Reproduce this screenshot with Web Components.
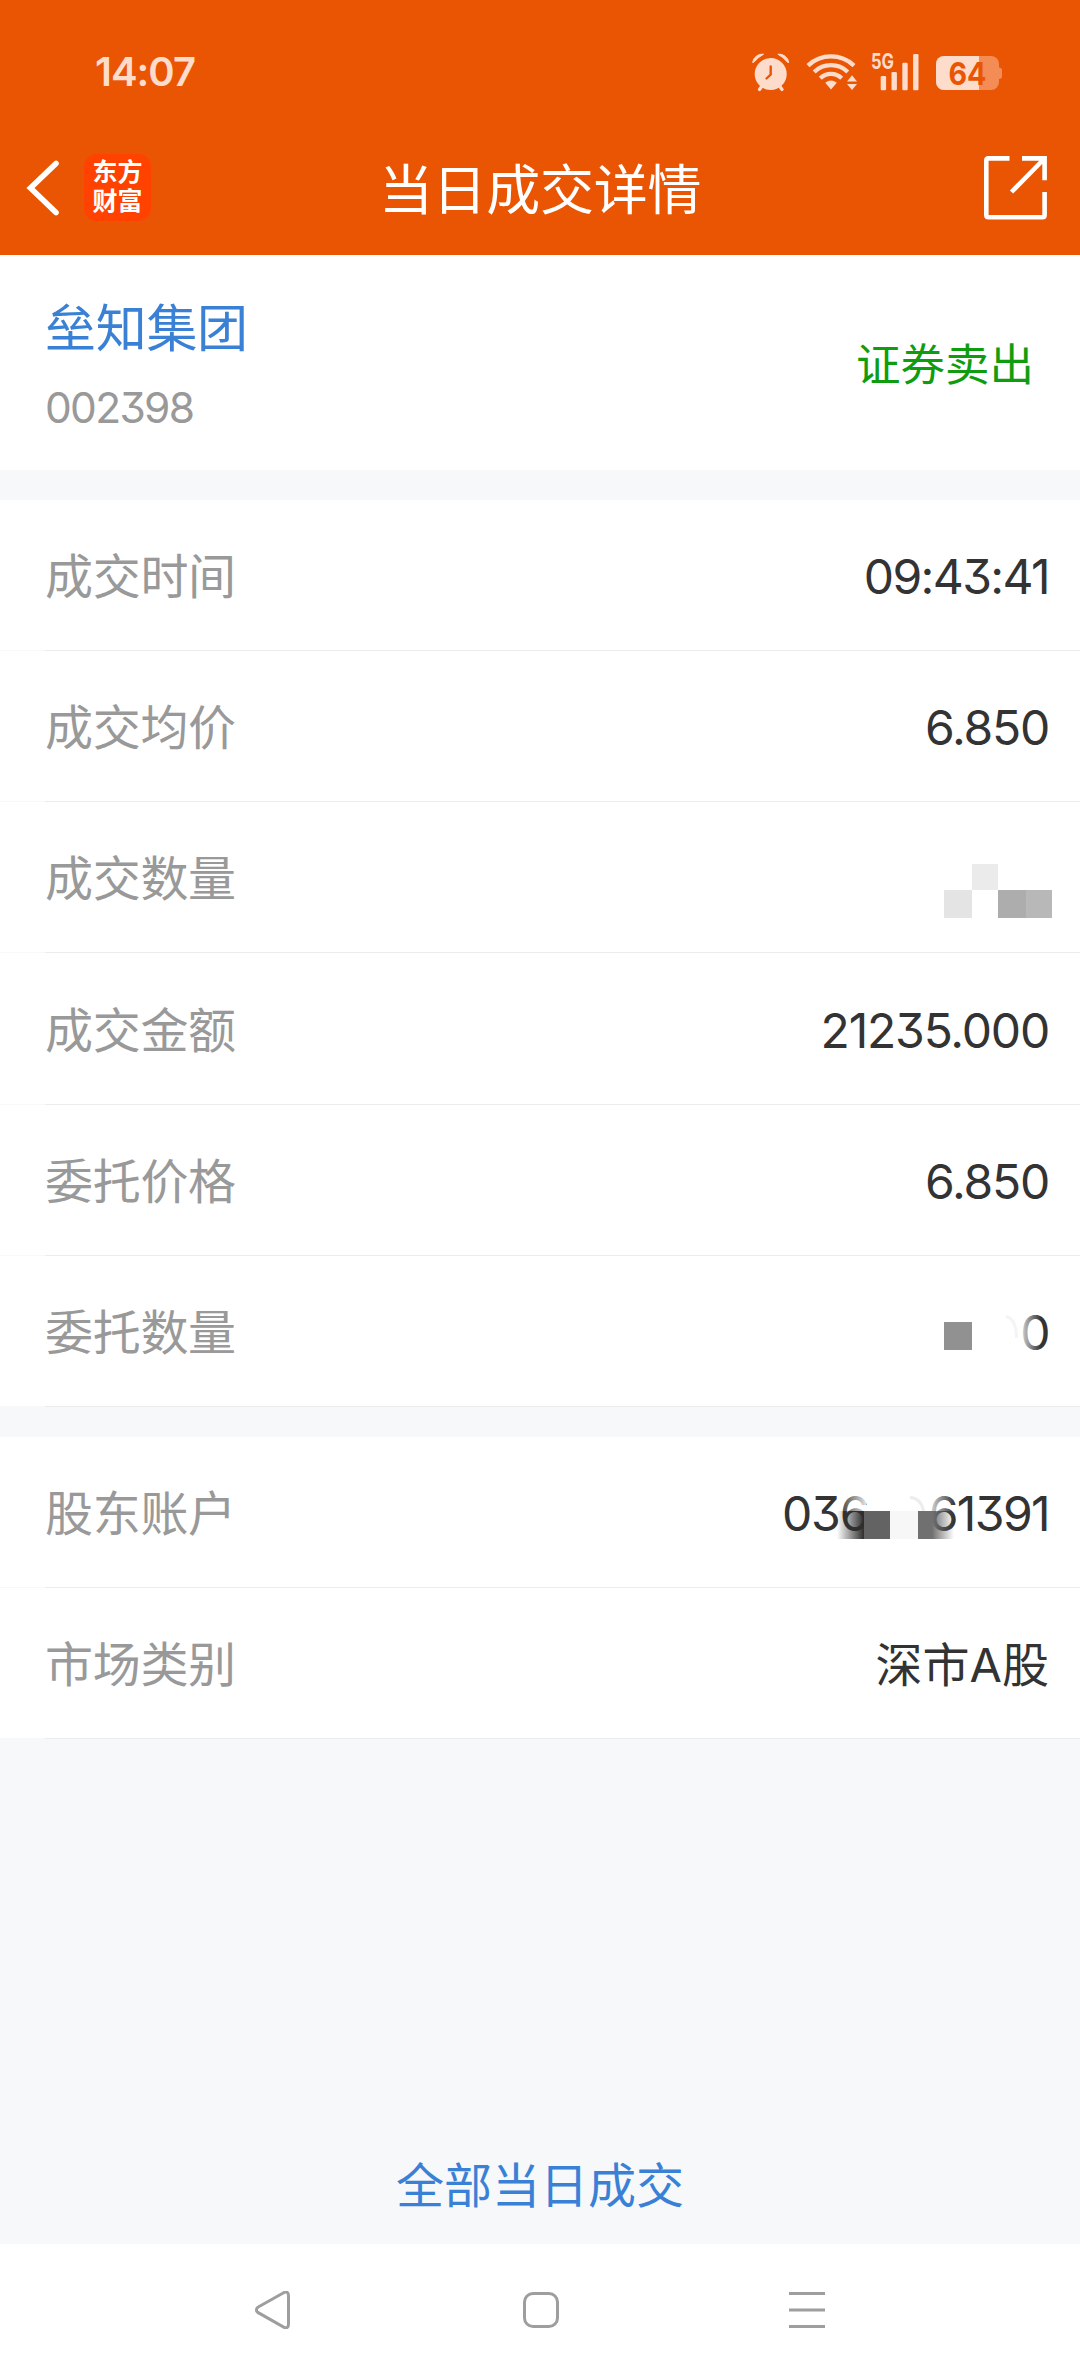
<!DOCTYPE html>
<html lang="zh-CN">
<head>
<meta charset="utf-8">
<title>当日成交详情</title>
<style>
  html, body {
    margin: 0;
    padding: 0;
  }

  body {
    --brand: #ea5504;
    --status: #fddccb;
    --link: #3a81d6;
    --sell: #0f9d0f;
    --label: #999;
    --text: #333;
    --page: #f6f8fa;
    --line: #ececec;
    width: 1080px;
    height: 2376px;
    overflow: hidden;
    background: var(--page);
    font-family: Inter, "Noto Sans CJK SC", sans-serif;
    font-feature-settings: "cv09";
  }
</style>
</head>
<body>
<trade-screen>
  <status-bar slot="header" time="14:07" battery="64"></status-bar>
  <title-bar slot="header" heading="当日成交详情"></title-bar>

  <stock-summary name="垒知集团" code="002398">证券卖出</stock-summary>

  <detail-group>
    <detail-row label="成交时间" tight>09:43:41</detail-row>
    <detail-row label="成交均价">6.850</detail-row>
    <detail-row label="成交数量"><masked-value kind="volume"></masked-value></detail-row>
    <detail-row label="成交金额">21235.000</detail-row>
    <detail-row label="委托价格">6.850</detail-row>
    <detail-row label="委托数量"><masked-value kind="order">0</masked-value></detail-row>
  </detail-group>

  <detail-group>
    <detail-row label="股东账户"><masked-value kind="account"><span slot="head">036</span>61391</masked-value></detail-row>
    <detail-row label="市场类别" cjk>深市A股</detail-row>
  </detail-group>

  <a slot="footer">全部当日成交</a>
  <nav-bar slot="nav"></nav-bar>
</trade-screen>

<script>
/**
 * Base class: opens a shadow root and fills it from template()
 */
class BaseElement extends HTMLElement {
  constructor() {
    super();
    this.attachShadow({ mode: 'open' });
  }

  connectedCallback() {
    this.shadowRoot.innerHTML = this.template();
  }

  attr(name) {
    return this.getAttribute(name) || '';
  }
}

/**
 * Whole screen: header, scrolling content, footer link, system nav
 */
class TradeScreen extends BaseElement {
  template() {
    return `
      <style>
        :host {
          display: flex;
          flex-direction: column;
          height: 2376px;
        }
        header {
          height: 255px;
          background: var(--brand);
        }
        main {
          display: flex;
          flex-direction: column;
          gap: 30px;
        }
        footer {
          flex: 1;
          display: flex;
          align-items: flex-end;
          justify-content: center;
          padding-bottom: 22px;
          font-size: 48px;
          line-height: 72px;
          color: var(--link);
        }
      </style>
      <header><slot name="header"></slot></header>
      <main><slot></slot></main>
      <footer><slot name="footer"></slot></footer>
      <slot name="nav"></slot>
    `;
  }
}

/**
 * System status bar
 */
class StatusBar extends BaseElement {
  template() {
    return `
      <style>
        :host {
          display: flex;
          align-items: center;
          box-sizing: border-box;
          height: 120px;
          padding: 24px 78px 0 95px;
          color: var(--status);
        }
        .time {
          flex: 1;
          font-size: 40px;
          font-weight: 600;
          line-height: 40px;
          letter-spacing: -1px;
        }
        svg {
          display: block;
          overflow: visible;
          fill: currentColor;
        }
        .wifi { margin-left: 16px; }
        .signal { margin-left: 12px; }
        .battery { margin-left: 16px; }
        .stroke {
          fill: none;
          stroke: currentColor;
        }
      </style>
      <span class="time">${this.attr('time')}</span>
      <svg width="38" height="40" viewBox="752 52 38 40">
        <circle cx="770.7" cy="74" r="16"/>
        <path d="M752.6 62.5 A9.8 9.8 0 0 1 763.5 54.2 Q759 56.5 753.5 62.5Z M788.8 62.5 A9.8 9.8 0 0 0 777.9 54.2 Q782.4 56.5 787.9 62.5Z" stroke="currentColor" stroke-width="1"/>
        <path class="stroke" d="M762 86 L759.5 89.5 M779.5 86 L782 89.5" stroke-width="3.2" stroke-linecap="round"/>
        <path d="M770.7 66.5 V74.5 L766.5 78.5" fill="none" stroke="#ea5504" stroke-width="2.4" stroke-linecap="round"/>
      </svg>
      <svg class="wifi" width="52" height="40" viewBox="806 52 52 40">
        <g class="stroke" stroke-width="4.2">
          <path d="M808 65.6 A33.5 33.5 0 0 1 854 65.6"/>
          <path d="M814.2 72 A24 24 0 0 1 847.8 72"/>
          <path d="M820.3 78.2 A15.2 15.2 0 0 1 841.7 78.2"/>
        </g>
        <path d="M825.2 82.7 Q831 78.2 836.8 82.7 L831 89.4Z"/>
        <path d="M852 75.2 L857 81.5 H847Z M852 90 L857 84 H847Z"/>
      </svg>
      <svg class="signal" width="50" height="50" viewBox="870 47 50 50">
        <text x="871" y="69" font-size="21.5" font-weight="700" textLength="23" lengthAdjust="spacingAndGlyphs">5G</text>
        <rect x="880.7" y="76" width="5.4" height="14.3" rx="1.2"/>
        <rect x="891.5" y="72" width="5.4" height="18.3" rx="1.2"/>
        <rect x="902.3" y="62.8" width="5.4" height="27.5" rx="1.2"/>
        <rect x="913.1" y="54" width="5.4" height="36.3" rx="1.2"/>
      </svg>
      <svg class="battery" width="66" height="40" viewBox="936 52 66 40">
        <clipPath id="level"><rect x="936" y="52" width="43" height="40"/></clipPath>
        <rect x="936" y="56" width="63" height="34" rx="8" fill="#f38c55"/>
        <path d="M999 67.5 Q1002 68 1002 70 V76.5 Q1002 78.5 999 79Z" fill="#f38c55"/>
        <rect x="936" y="56" width="63" height="34" rx="8" clip-path="url(#level)"/>
        <text x="948.5" y="84.5" font-size="31" font-weight="700" fill="#ea5504" textLength="38" lengthAdjust="spacingAndGlyphs">${this.attr('battery')}</text>
      </svg>
    `;
  }
}

/**
 * App title bar: back, brand badge, heading, share
 */
class TitleBar extends BaseElement {
  template() {
    return `
      <style>
        :host {
          display: grid;
          grid-template-columns: 1fr auto 1fr;
          align-items: center;
          box-sizing: border-box;
          height: 135px;
          padding: 0 32px 0 32px;
          color: #fff;
        }
        .left {
          display: flex;
          align-items: center;
          gap: 24px;
          margin-left: -6px;
        }
        .badge {
          box-sizing: border-box;
          width: 67px;
          height: 67px;
          padding: 4px 0 0 8.5px;
          border-radius: 13px;
          background: #ff4200;
          font-size: 25px;
          font-weight: 700;
          line-height: 29px;
          white-space: nowrap;
        }
        h1 {
          margin: 7px 0 0;
          font-size: 54px;
          font-weight: 400;
          line-height: 80px;
          letter-spacing: -0.3px;
        }
        .share { justify-self: end; }
        svg {
          display: block;
          fill: none;
          stroke: currentColor;
        }
      </style>
      <div class="left">
        <svg width="34" height="60" viewBox="26 158 34 60">
          <path d="M56 163.5 L30.5 188 L56 212.5" stroke-width="5.6" stroke-linecap="round" stroke-linejoin="miter"/>
        </svg>
        <div class="badge">东方<br>财富</div>
      </div>
      <h1>${this.attr('heading')}</h1>
      <svg class="share" width="64" height="64" viewBox="984 156 64 64" stroke-width="4.6">
        <path d="M1009.5 158.4 H988.5 Q986.3 158.4 986.3 160.6 V215 Q986.3 217.2 988.5 217.2 H1042.4 Q1044.6 217.2 1044.6 215 V192"/>
        <path d="M1022 158.4 H1044.6 V180.3 M1044 159 L1011.5 192"/>
      </svg>
    `;
  }
}

/**
 * Stock name and code, with the trade side slotted at the right
 */
class StockSummary extends BaseElement {
  template() {
    return `
      <style>
        :host {
          display: flex;
          align-items: center;
          justify-content: space-between;
          box-sizing: border-box;
          height: 215px;
          padding: 0 46px 0 45px;
          background: #fff;
        }
        .name {
          margin-top: 9px;
          font-size: 51px;
          line-height: 76px;
          letter-spacing: -0.3px;
          color: var(--link);
        }
        .code {
          margin-top: 5px;
          font-size: 42.5px;
          line-height: 72px;
          letter-spacing: -1.7px;
          color: var(--label);
        }
        .side {
          margin-top: 5px;
          font-size: 44.5px;
          line-height: 68px;
          color: var(--sell);
        }
      </style>
      <div>
        <div class="name">${this.attr('name')}</div>
        <div class="code">${this.attr('code')}</div>
      </div>
      <div class="side"><slot></slot></div>
    `;
  }
}

/**
 * White block of rows
 */
class DetailGroup extends BaseElement {
  template() {
    return `
      <style>
        :host {
          display: block;
          background: #fff;
        }
      </style>
      <slot></slot>
    `;
  }
}

/**
 * Label / value row with an inset hairline
 */
class DetailRow extends BaseElement {
  template() {
    return `
      <style>
        :host {
          display: flex;
          align-items: center;
          justify-content: space-between;
          box-sizing: border-box;
          height: 151.17px;
          padding: 3px 31px 0 45px;
          background: linear-gradient(90deg, #f8f8f8 45px, var(--line) 45px) bottom / 100% 1px no-repeat #fff;
          line-height: 72px;
        }
        .label {
          font-size: 48px;
          letter-spacing: -0.3px;
          color: var(--label);
        }
        .value {
          font-size: 48px;
          letter-spacing: -1.2px;
          color: var(--text);
        }
        :host([tight]) .value {
          letter-spacing: -1.6px;
        }
        :host([cjk]) .value {
          font-size: 47px;
          letter-spacing: 0;
        }
      </style>
      <span class="label">${this.attr('label')}</span>
      <span class="value"><slot></slot></span>
    `;
  }
}

/**
 * Value hidden behind a mosaic. The svg lies over whatever text is left visible.
 */
class MaskedValue extends BaseElement {
  mosaic() {
    switch (this.attr('kind')) {
      case 'volume':
        return `
          <rect x="164" y="88" width="28" height="28" fill="#e4e4e4"/>
          <rect x="192" y="62" width="26" height="26" fill="#ebebeb"/>
          <rect x="218" y="88" width="28" height="28" fill="#adadad"/>
          <rect x="246" y="88" width="26" height="28" fill="#b8b8b8"/>`;
      case 'order':
        return `
          <defs>
            <linearGradient id="fade"><stop offset="0" stop-color="#fff" stop-opacity=".8"/><stop offset="1" stop-color="#fff" stop-opacity="0"/></linearGradient>
          </defs>
          <rect x="241" y="50" width="20" height="50" fill="url(#fade)"/>
          <rect x="164" y="66" width="28" height="28" fill="#919191"/>
          <path d="M226 60.5 Q236.5 63 236.5 82" fill="none" stroke="#f4f4f4" stroke-width="3"/>`;
      case 'account':
        return `
          <defs>
            <linearGradient id="in"><stop offset="0" stop-color="#2e2e2e" stop-opacity="0"/><stop offset="1" stop-color="#2e2e2e"/></linearGradient>
            <linearGradient id="out"><stop offset="0" stop-color="#707070"/><stop offset="1" stop-color="#707070" stop-opacity="0"/></linearGradient>
            <linearGradient id="l"><stop offset="0" stop-color="#fff" stop-opacity="0"/><stop offset="1" stop-color="#fff" stop-opacity=".85"/></linearGradient>
            <linearGradient id="r"><stop offset="0" stop-color="#fff" stop-opacity=".85"/><stop offset="1" stop-color="#fff" stop-opacity="0"/></linearGradient>
          </defs>
          <rect x="58" y="54" width="28" height="20" fill="url(#l)"/>
          <rect x="149" y="54" width="26" height="20" fill="url(#r)"/>
          <path d="M130 60.5 Q141 61 143.5 74" fill="none" stroke="#ededed" stroke-width="3"/>
          <rect x="57" y="74" width="27" height="28" fill="url(#in)"/>
          <rect x="84" y="74" width="26" height="28" fill="#636363"/>
          <rect x="110" y="74" width="28" height="28" fill="#f7f7f7"/>
          <rect x="138" y="74" width="14" height="28" fill="#707070"/>
          <rect x="152" y="74" width="22" height="28" fill="url(#out)"/>`;
    }
    return '';
  }

  template() {
    return `
      <style>
        :host {
          position: relative;
          display: flex;
          justify-content: space-between;
          width: 269px;
          height: 148px;
          line-height: 148px;
        }
        .head { margin-left: 2px; }
        .tail { letter-spacing: -1.6px; }
        svg {
          position: absolute;
          left: 0;
          top: -3px;
          overflow: visible;
        }
      </style>
      <span class="head"><slot name="head"></slot></span>
      <span class="tail"><slot></slot></span>
      <svg width="269" height="151" viewBox="0 0 269 151">${this.mosaic()}</svg>
    `;
  }
}

/**
 * Android navigation keys
 */
class NavBar extends BaseElement {
  template() {
    return `
      <style>
        :host {
          display: flex;
          align-items: center;
          justify-content: space-between;
          box-sizing: border-box;
          height: 132px;
          padding: 0 254px 0 254px;
          background: #fff;
        }
        svg {
          display: block;
          fill: none;
          stroke: #9e9e9e;
          stroke-width: 3;
        }
      </style>
      <svg width="38" height="38" viewBox="0 0 38 38">
        <path d="M3.8 16.3 L30.5 1.3 Q34.5 0.2 34.5 5 V33 Q34.5 37.6 30.5 36.6 L3.8 21.4 Q1 19 3.8 16.3Z"/>
      </svg>
      <svg width="38" height="38" viewBox="-1 0 38 38">
        <rect x="2.5" y="2.5" width="33" height="33" rx="8.5"/>
      </svg>
      <svg width="38" height="38" viewBox="0 0 38 38">
        <path d="M1 2.5 H37 M1 19 H37 M1 35.5 H37"/>
      </svg>
    `;
  }
}

customElements.define('trade-screen', TradeScreen);
customElements.define('status-bar', StatusBar);
customElements.define('title-bar', TitleBar);
customElements.define('stock-summary', StockSummary);
customElements.define('detail-group', DetailGroup);
customElements.define('detail-row', DetailRow);
customElements.define('masked-value', MaskedValue);
customElements.define('nav-bar', NavBar);
</script>
</body>
</html>
